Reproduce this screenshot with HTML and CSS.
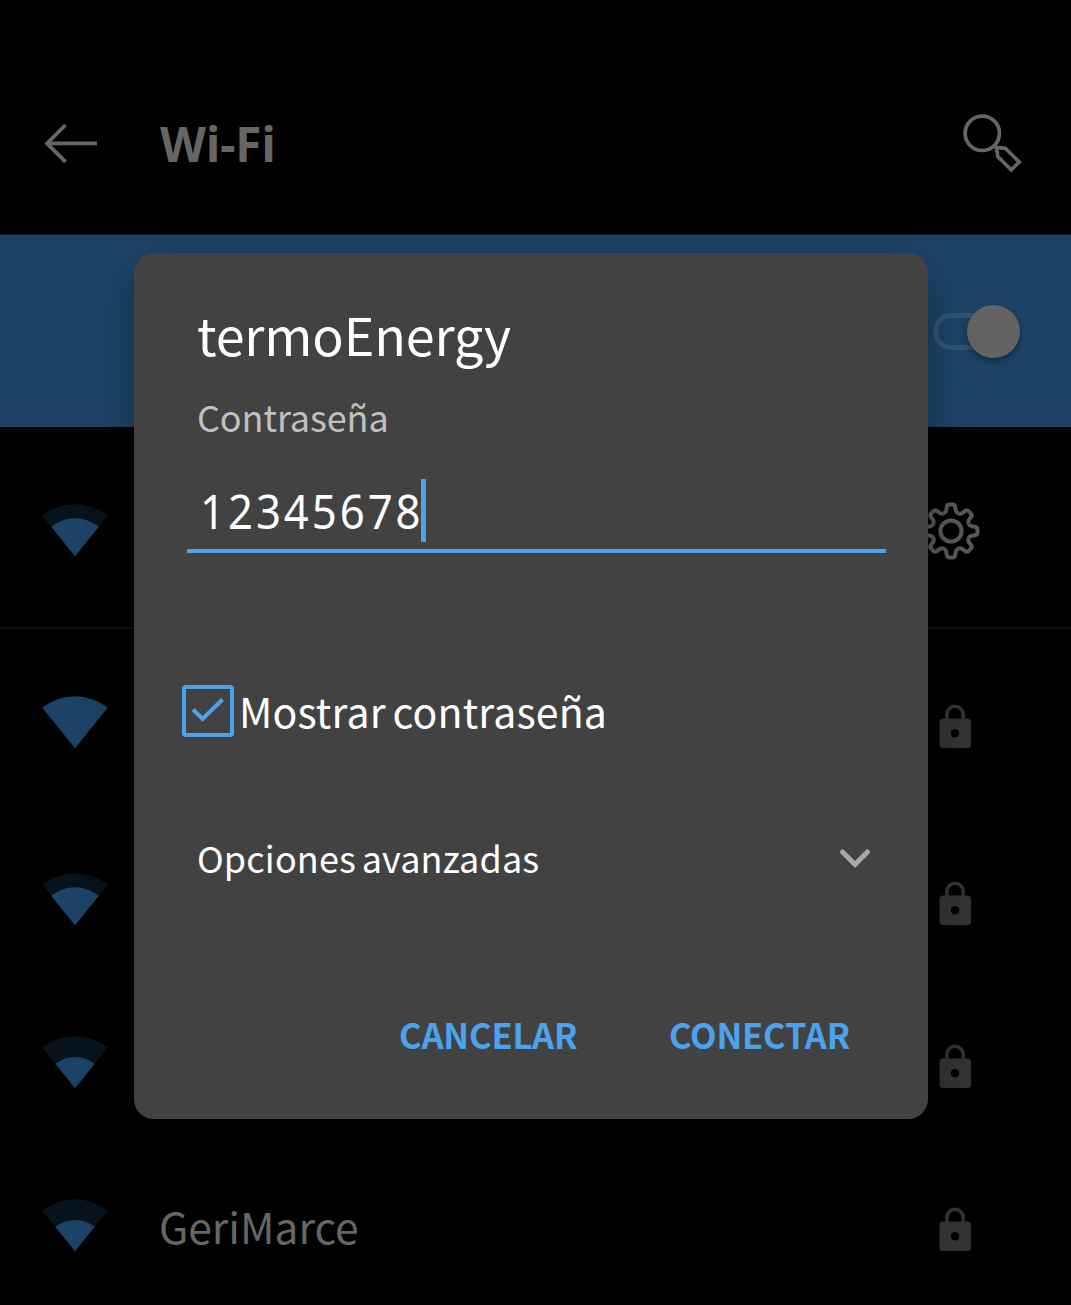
FILE: index.html
```html
<!DOCTYPE html>
<html lang="es">
<head>
<meta charset="utf-8">
<title>Wi-Fi</title>
<link rel="stylesheet" href="styles.css">
</head>
<body>
<svg class="defs" aria-hidden="true">
  <defs>
    <symbol id="fan" viewBox="0 0 66 53"><path d="M33 52.3 0.3 11.7A52.1 52.1 0 0 1 65.7 11.7Z"/></symbol>
    <symbol id="fan-mid" viewBox="0 0 66 53"><path d="M33 52.3 9.2 22.7A38 38 0 0 1 56.8 22.7Z"/></symbol>
    <symbol id="fan-low" viewBox="0 0 66 53"><path d="M33 52.3 13.3 27.8A31.5 31.5 0 0 1 52.7 27.8Z"/></symbol>
    <symbol id="lock" viewBox="0 0 32 45">
      <path d="M7.8 17V10.500a8.200 8.200 0 0 1 16.400 0V17" fill="none" stroke="#333" stroke-width="3.6"/>
      <rect x="0.5" y="14.500" width="31.500" height="29.500" rx="3.5" fill="#333"/>
      <circle cx="16" cy="29.300" r="4.200" fill="#000"/>
    </symbol>
    <path id="half-tooth" d="M0-26.5H1.5Q4-26.5 4.3-23.8L4.7-21C5-19.3 5.6-18.25 7.27-17.55"/>
    <g id="tooth"><use href="#half-tooth"/><use href="#half-tooth" transform="scale(-1 1)"/></g>
  </defs>
</svg>
<main class="screen">
  <header class="bar">
    <svg class="back" viewBox="0 0 54 42"><path d="M53 21.400H3M21.500 3 3 21.400 21.500 39.800"/></svg>
    <h1 class="bar-title">Wi-Fi</h1>
    <svg class="search" viewBox="0 0 60 60"><circle cx="20.300" cy="20.300" r="17.200"/><path d="M32.800 32.500 34 34.300 43.300 35.300 57.200 49 49.300 57 35.800 43.500 34.400 34.300"/></svg>
  </header>
  <section class="band"><span class="toggle"><span class="track"></span><span class="knob"></span></span></section>
  <ul class="networks">
    <li class="net net-current">
      <svg class="wifi"><use class="dim" href="#fan"/><use href="#fan-mid"/></svg>
      <svg class="gear" viewBox="-29 -29 58 58"><circle r="10.600"/><use href="#tooth"/><use href="#tooth" transform="rotate(45)"/><use href="#tooth" transform="rotate(90)"/><use href="#tooth" transform="rotate(135)"/><use href="#tooth" transform="rotate(180)"/><use href="#tooth" transform="rotate(225)"/><use href="#tooth" transform="rotate(270)"/><use href="#tooth" transform="rotate(315)"/></svg>
    </li>
    <li class="net net-first">
      <svg class="wifi"><use href="#fan"/></svg>
      <svg class="lock"><use href="#lock"/></svg>
    </li>
    <li class="net">
      <svg class="wifi"><use class="dim" href="#fan"/><use href="#fan-mid"/></svg>
      <svg class="lock"><use href="#lock"/></svg>
    </li>
    <li class="net">
      <svg class="wifi"><use class="dim" href="#fan"/><use href="#fan-low"/></svg>
      <svg class="lock"><use href="#lock"/></svg>
    </li>
    <li class="net">
      <svg class="wifi"><use class="dim" href="#fan"/><use href="#fan-low"/></svg>
      <span class="net-name">GeriMarce</span>
      <svg class="lock"><use href="#lock"/></svg>
    </li>
  </ul>
</main>
<section class="dialog" role="dialog">
  <h2 class="dialog-title">termoEnergy</h2>
  <div class="label">Contraseña</div>
  <div class="field"><div class="value-box"><span class="value">12345678</span></div><span class="caret"></span></div>
  <div class="show">
    <svg class="check" viewBox="0 0 52 52"><rect x="2" y="2" width="48" height="48" rx="2"/><path d="M11 24.500 20.600 34 40.500 14.500"/></svg>
    <span class="show-text">Mostrar contraseña</span>
  </div>
  <div class="advanced">
    <span class="advanced-text">Opciones avanzadas</span>
    <svg class="chevron" viewBox="0 0 30 20"><path d="M2.600 3 15 15.500 27.400 3"/></svg>
  </div>
  <div class="actions"><span class="action cancel">CANCELAR</span><span class="action connect">CONECTAR</span></div>
</section>
</body>
</html>
```
FILE: styles.css
```css
* { box-sizing: border-box; margin: 0; padding: 0; }
body { background: #000; overflow: hidden; font-family: "Noto Sans CJK SC", "Noto Sans", sans-serif; font-weight: 400; }
.defs { display: block; width: 0; height: 0; }
svg { display: block; flex: none; }
.screen { width: 1071px; height: 1305px; overflow: hidden; background: #000; }

.bar { display: flex; align-items: flex-start; height: 235px; padding: 113px 48px 0 44px; border-bottom: 1px solid #0b141c; }
.back { width: 54px; height: 42px; margin-top: 9px; fill: none; stroke: #666; stroke-width: 3.8; }
.bar-title { margin: 1px 0 0 62px; flex: 1; font: 700 47.5px/60px "Noto Sans", sans-serif; color: #666; white-space: nowrap; }
.search { width: 60px; height: 60px; margin-right: 1px; fill: none; stroke: #666; stroke-width: 3.7; }

.band { display: flex; justify-content: flex-end; height: 192px; padding: 70px 51px 0 0; background: #1c4366; }
.toggle { display: flex; align-items: center; width: 87px; height: 53px; }
.track { width: 76px; height: 37px; border: 5px solid #345470; border-radius: 19px; }
.knob { width: 53px; height: 53px; margin-left: -42px; flex: none; border-radius: 50%; background: #636363; box-shadow: 0 3px 6px rgba(0, 0, 0, .4); }

.networks { list-style: none; }
.net { display: flex; align-items: flex-start; height: 163px; padding: 55px 98px 0 42px; }
.net-current { height: 202px; padding: 77px 91px 0 42px; border-bottom: 2px solid #0d0d0d; }
.net-first { height: 189px; padding-top: 67px; }
.wifi { width: 66px; height: 53px; fill: #1c4366; }
.dim { fill: #07131c; }
.net-name { margin: -1px 0 0 51px; font-size: 42.5px; line-height: 56px; color: #666; white-space: nowrap; }
.gear { width: 58px; height: 58px; margin: -2px .5px 0 auto; fill: none; stroke: #5a5a5a; stroke-width: 4; }
.lock { width: 32px; height: 45px; margin: 8px 2px 0 auto; }

.dialog { position: absolute; left: 134px; top: 253px; width: 794px; height: 866px; padding: 46px 42px 0 53px; border-radius: 20px; background: #424242; color: #fff; box-shadow: 0 14px 50px rgba(0, 0, 0, .3); white-space: nowrap; }
.dialog-title { margin-left: 10px; font-size: 52px; line-height: 70px; font-weight: 400; letter-spacing: -.15px; }
.label { margin: 22px 0 0 10px; font-size: 36px; line-height: 50px; letter-spacing: -.1px; color: #c0c0c0; }
.field { display: flex; height: 77px; margin-top: 35px; padding: 3px 0 0 13px; border-bottom: 4px solid #4ca3ed; }
.value-box { width: 221px; height: 65px; }
.value { display: inline-block; font: 400 47.5px/63px "Noto Sans", sans-serif; letter-spacing: 3.2px; transform: scaleX(.92); transform-origin: left; }
.caret { width: 5px; height: 63px; background: #4ca3ed; }
.show { display: flex; align-items: center; height: 60px; margin: 128px 0 0 -5px; }
.check { width: 52px; height: 52px; fill: none; stroke: #4ca3ed; stroke-width: 4; }
.show-text { margin: -3px 0 0 5px; font-size: 41px; line-height: 60px; letter-spacing: .15px; word-spacing: -2.6px; }
.advanced { display: flex; align-items: center; height: 50px; margin: 92px 16.5px 0 10px; }
.advanced-text { flex: 1; margin-top: -2px; font-size: 36px; line-height: 50px; letter-spacing: .15px; word-spacing: -2.6px; }
.chevron { width: 30px; height: 20px; margin-top: 2px; fill: none; stroke: #a8a8a8; stroke-width: 5; stroke-linecap: round; }
.actions { display: flex; height: 50px; margin: 126px 0 0 212px; font-size: 34.5px; line-height: 50px; font-weight: 700; letter-spacing: -.2px; color: #4ca3ed; }
.cancel { width: 270px; }
```
